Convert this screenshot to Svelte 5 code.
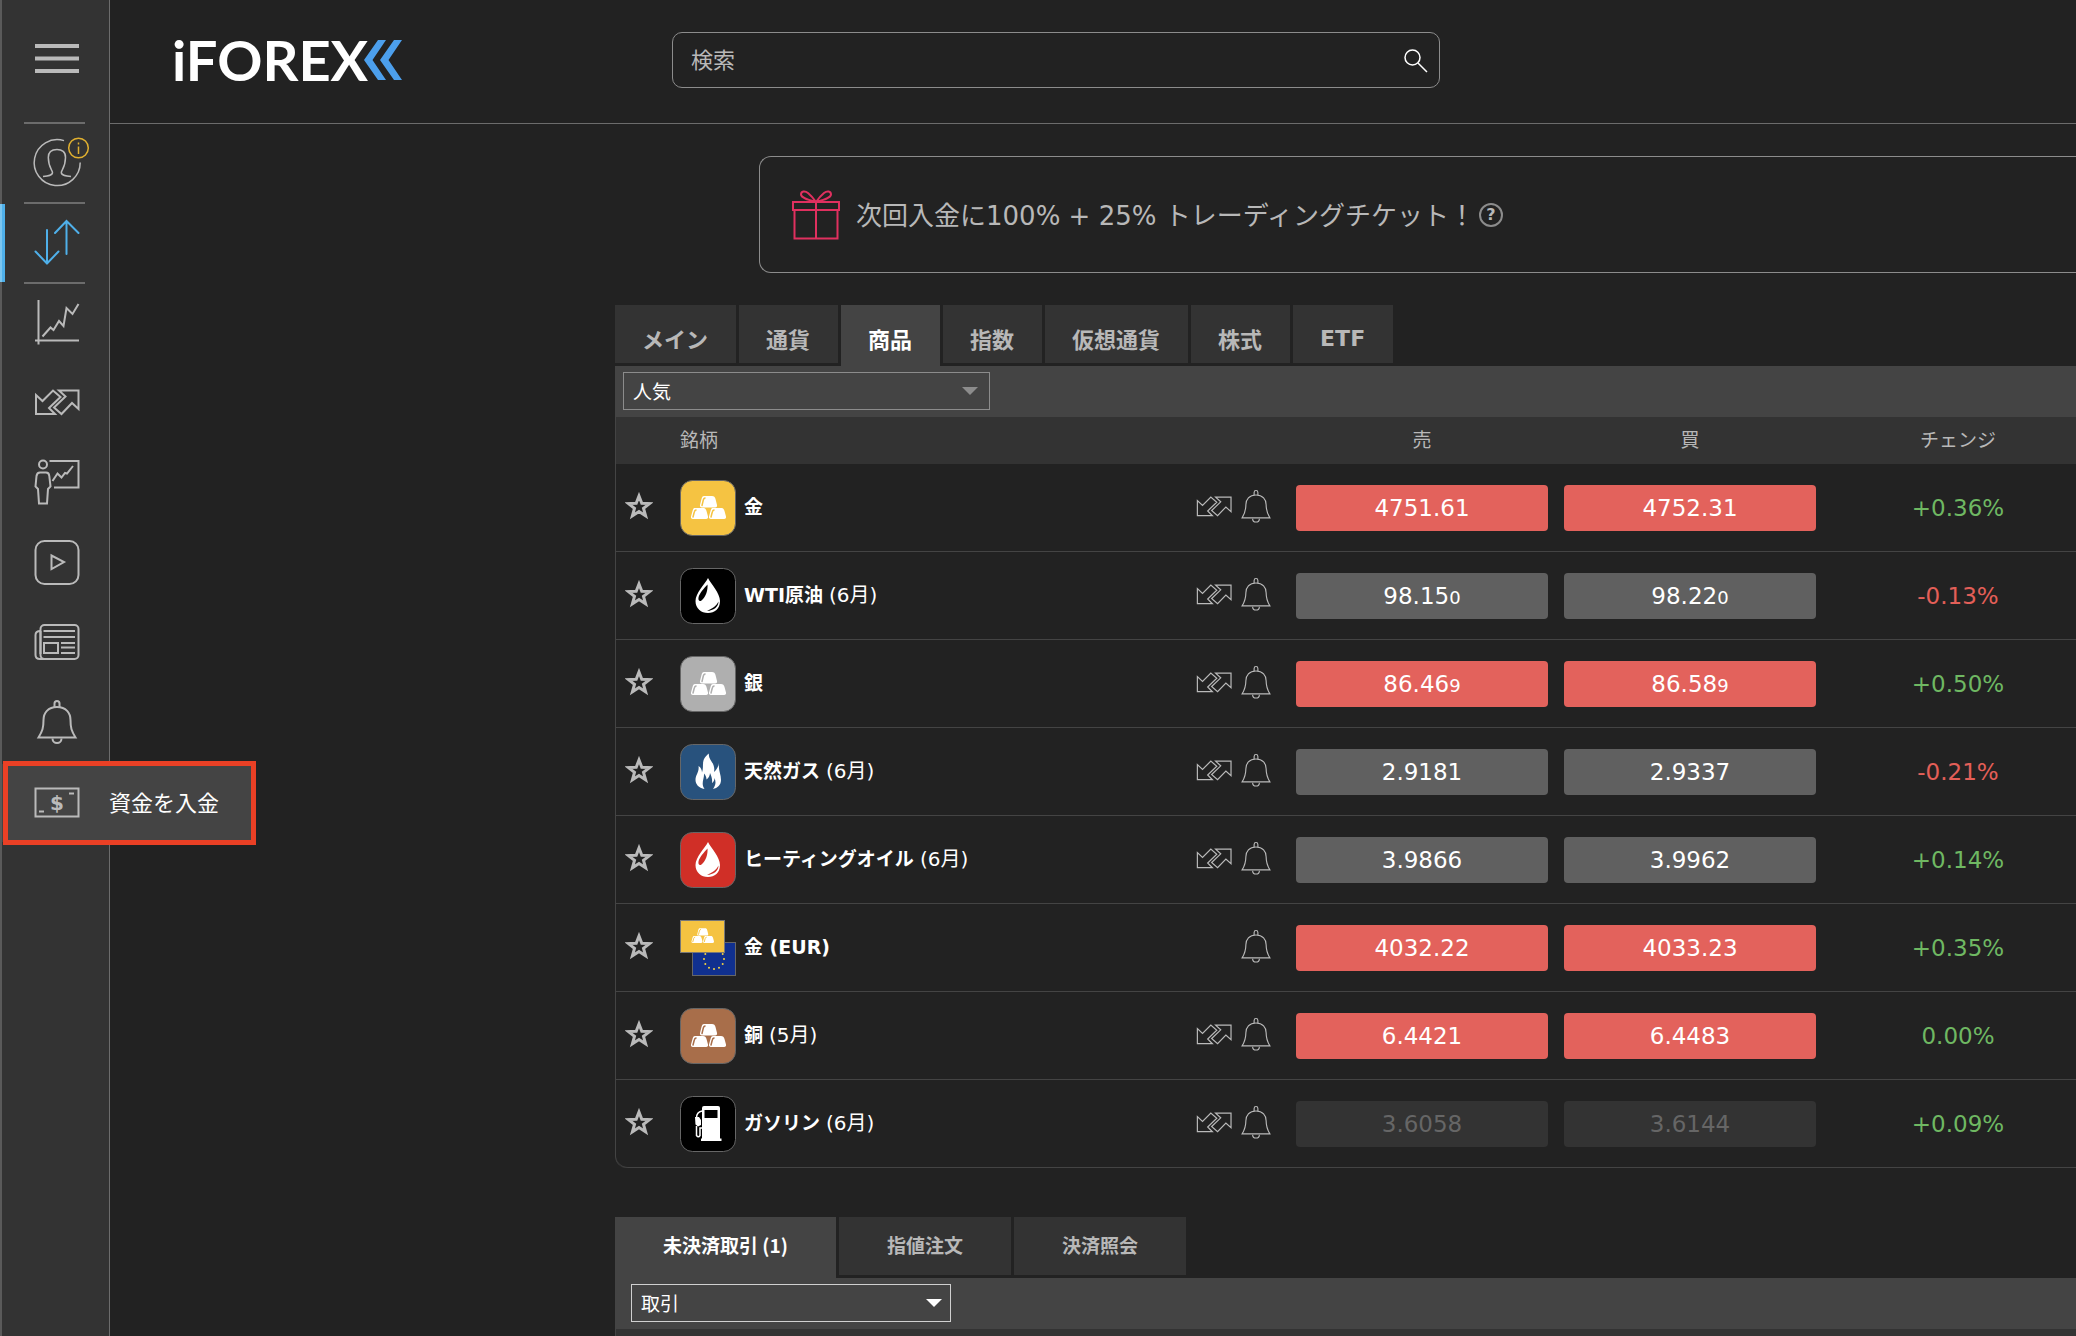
<script lang="ts">
  type Price = { main: string; small?: string };
  type Row = {
    id: string;
    icon: "metal" | "drop" | "flame" | "pair" | "pump";
    color: string;
    name: string;
    month?: string;
    deal: boolean;
    sell: Price;
    buy: Price;
    state: "down" | "flat" | "closed";
    change: string;
  };

  const nav = [
    { id: "account", label: "アカウント", line: true },
    { id: "trade", label: "トレード", line: true },
    { id: "chart", label: "チャート" },
    { id: "deal", label: "取引" },
    { id: "learn", label: "教育" },
    { id: "video", label: "ビデオ" },
    { id: "news", label: "ニュース" },
    { id: "bell", label: "アラート" },
  ];

  const rows: Row[] = [
    { id: "gold", icon: "metal", color: "#f5c342", name: "金", deal: true, sell: { main: "4751.61" }, buy: { main: "4752.31" }, state: "down", change: "+0.36%" },
    { id: "wti", icon: "drop", color: "#000", name: "WTI原油", month: "(6月)", deal: true, sell: { main: "98.15", small: "0" }, buy: { main: "98.22", small: "0" }, state: "flat", change: "-0.13%" },
    { id: "silver", icon: "metal", color: "#afafaf", name: "銀", deal: true, sell: { main: "86.46", small: "9" }, buy: { main: "86.58", small: "9" }, state: "down", change: "+0.50%" },
    { id: "gas", icon: "flame", color: "#28527d", name: "天然ガス", month: "(6月)", deal: true, sell: { main: "2.9181" }, buy: { main: "2.9337" }, state: "flat", change: "-0.21%" },
    { id: "heating", icon: "drop", color: "#d02f27", name: "ヒーティングオイル", month: "(6月)", deal: true, sell: { main: "3.9866" }, buy: { main: "3.9962" }, state: "flat", change: "+0.14%" },
    { id: "goldeur", icon: "pair", color: "#f5c342", name: "金 (EUR)", deal: false, sell: { main: "4032.22" }, buy: { main: "4033.23" }, state: "down", change: "+0.35%" },
    { id: "copper", icon: "metal", color: "#a86e4a", name: "銅", month: "(5月)", deal: true, sell: { main: "6.4421" }, buy: { main: "6.4483" }, state: "down", change: "0.00%" },
    { id: "gasoline", icon: "pump", color: "#000", name: "ガソリン", month: "(6月)", deal: true, sell: { main: "3.6058" }, buy: { main: "3.6144" }, state: "closed", change: "+0.09%" },
  ];

  const markets = ["メイン", "通貨", "商品", "指数", "仮想通貨", "株式", "ETF"];
  const reports = ["未決済取引 (1)", "指値注文", "決済照会"];

  // twelve flag stars on a circle
  const stars = Array.from({ length: 12 }, (_, i) => {
    const a = (i * Math.PI) / 6;
    return { x: 34 + 10 * Math.sin(a), y: 39 - 10 * Math.cos(a) };
  });

  let market = $state("商品");
  let report = $state("未決済取引 (1)");
  let query = $state("");
</script>

{#snippet bars()}
  <path fill="#fff" d="M24 16h8c2 0 3 1 3.5 3l1.5 6c.3 1.5-.3 2.5-2 2.5H22c-1.7 0-2.3-1-2-2.5l1.5-6c.5-2 1-3 2.5-3z" />
  <path fill="#fff" d="M15 28h8c2 0 3 1 3.5 3l1.5 5.5c.3 1.5-.3 2.5-2 2.5H13c-1.7 0-2.3-1-2-2.5l1.5-5.5c.5-2 1-3 2.5-3z" />
  <path fill="#fff" d="M33 28h8c2 0 3 1 3.5 3l1.5 5.5c.3 1.5-.3 2.5-2 2.5H31c-1.7 0-2.3-1-2-2.5l1.5-5.5c.5-2 1-3 2.5-3z" />
{/snippet}

{#snippet shine(color: string)}
  <g fill="none" stroke={color} stroke-width="1.5" stroke-linecap="round">
    <path d="M22 25.5l1.3-5.5q.4-1.8 1.7-2" />
    <path d="M13 37l1.3-5q.4-1.8 1.7-2" />
    <path d="M31 37l1.3-5q.4-1.8 1.7-2" />
  </g>
{/snippet}

{#snippet icon(id: string)}
  <svg class="icon" viewBox="0 0 48 48" aria-hidden="true">
    {#if id === "account"}
      <g stroke-width="1.5">
        <path d="M31 1.6A23 23 0 1 0 47.2 23.5" />
        <path d="M10 37.5C15 37 19.5 36.5 19.5 33.5C19.5 31 15.5 29 15.3 18.5C15.3 13 19 10.5 24 10.5C29 10.5 32.7 13 32.5 18.5C32.3 29 28.3 31 28.3 33.5C28.3 36.5 33 37 38 37.5" />
        <g stroke="#e0b030">
          <circle cx="45.5" cy="9" r="9.8" />
          <path d="M45.5 7.5V15M45.5 3.5v2" />
        </g>
      </g>
    {:else if id === "trade"}
      <path d="M14 11V44.5M2.5 32.5L14 44.5L25.5 32.5M33.5 35V2M22 14L33.5 2L45.5 14" stroke-linecap="round" />
    {:else if id === "chart"}
      <path d="M5.5 1V45.5M2 41.5H46M9.5 37.5L17.5 28.5L20.5 31L26 22L30.5 27L33.5 9L39.5 15L45.5 5" />
    {:else if id === "deal"}
      <path d="M3 16V35H22L16 29L27.5 18L20 11.5L9.5 22Z" />
      <path d="M26 11.5H45.5V30L39 24L28.5 35L21 28.5L32.5 17.5Z" />
    {:else if id === "learn"}
      <circle cx="10" cy="5.5" r="4" />
      <path d="M16.5 2H45.5V28.5H21M19.5 22L24.5 14.5L28.5 18.5L32 14L34 14.5L40 7" />
      <path d="M7 13.5H13Q16 13.5 16.3 17L17.5 27.5L15 30L14 44.5H6L5 30L2.5 27.5L3.5 17Q4 13.5 7 13.5Z" />
    {:else if id === "video"}
      <rect x="2.5" y="2" width="43" height="43" rx="9" />
      <path d="M18.5 16.5V30L31 23Z" />
    {:else if id === "news"}
      <rect x="7.5" y="6" width="38" height="34" rx="4" />
      <path d="M7.5 12Q2.5 12 2.5 16V36Q2.5 40 7 40H12M7.5 12V35M10.5 12H42M10.5 18H42M28 24H42M28 28.5H42M28 34H42" />
      <rect x="11" y="24" width="14" height="10" />
    {:else if id === "bell"}
      <path d="M24 8C15 8 10.5 14 10.5 21C10.5 29 9.5 32 5.5 38.5H42.5C38.5 32 37.5 29 37.5 21C37.5 14 33 8 24 8Z" />
      <path d="M21.5 8V4.5Q21.5 2 24 2Q26.5 2 26.5 4.5V8M19.5 39.5A4.5 4.5 0 0 0 28.5 39.5" />
    {:else}
      <rect x="2.5" y="9.5" width="43" height="28" />
      <path d="M36 14.5H41M6 32.5H11" />
      <text x="24" y="31" text-anchor="middle">$</text>
    {/if}
  </svg>
{/snippet}

{#snippet price(p: Price, state: string, side: string)}
  <button class="price {state}" disabled={state === "closed"} aria-label="{side} {p.main}{p.small ?? ''}">
    {p.main}{#if p.small}<span class="pip">{p.small}</span>{/if}
  </button>
{/snippet}

<div class="app">
  <nav class="sidebar">
    <button class="nav-item menu" aria-label="メニュー">
      <svg class="icon" viewBox="0 0 48 48" aria-hidden="true">
        <path stroke-width="4" d="M2 11H46M2 23.5H46M2 36H46" />
      </svg>
    </button>
    <hr />
    {#each nav as n (n.id)}
      <button class="nav-item" class:active={n.id === "trade"} aria-label={n.label}>
        {@render icon(n.id)}
      </button>
      <hr class:blank={!n.line} />
    {/each}
    <button class="nav-item deposit">
      {@render icon("deposit")}
      <span>資金を入金</span>
    </button>
  </nav>

  <div class="page">
    <header class="topbar">
      <a class="logo" href="/" aria-label="iFOREX">
        <span>iFOREX</span>
        <svg viewBox="0 0 38 40" aria-hidden="true">
          <path d="M14 0H22L8.5 20L22 40H14L0 20ZM30 0H38L24.5 20L38 40H30L16 20Z" />
        </svg>
      </a>
      <label class="search">
        <input type="text" placeholder="検索" aria-label="検索" bind:value={query} />
        <svg viewBox="0 0 24 24" aria-hidden="true">
          <circle cx="8.5" cy="9.5" r="7.5" />
          <path d="M14 15L23 24" />
        </svg>
      </label>
    </header>

    <main>
      <section class="banner">
        <svg class="gift" viewBox="0 0 48 50" aria-hidden="true">
          <path d="M1 12H47V20H1ZM2.5 20V48.5H45.5V20M24 12V48.5" />
          <path d="M24 12C17 10 9 8 9 4.5C9 1 13 .5 16 3C19 5.5 22 9 24 12C26 9 29 5.5 32 3C35 .5 39 1 39 4.5C39 8 31 10 24 12Z" />
        </svg>
        <span>次回入金に100% + 25% トレーディングチケット！</span>
        <button class="help" aria-label="ヘルプ">?</button>
      </section>

      <div class="tabs market-tabs" role="tablist">
        {#each markets as m (m)}
          <button role="tab" aria-selected={market === m} class:selected={market === m} onclick={() => (market = m)}>{m}</button>
        {/each}
      </div>

      <section class="panel">
        <div class="filter">
          <div class="select wide">
            <select aria-label="カテゴリー"><option>人気</option></select>
          </div>
        </div>
        <table>
          <thead>
            <tr>
              <th class="col-star"></th>
              <th class="col-name">銘柄</th>
              <th class="col-tools"></th>
              <th class="col-price">売</th>
              <th class="col-price">買</th>
              <th class="col-change">チェンジ</th>
            </tr>
          </thead>
          <tbody>
            {#each rows as r (r.id)}
              <tr>
                <td class="col-star">
                  <button class="plain" aria-label="お気に入り">
                    <svg class="star" viewBox="0 0 28 28" aria-hidden="true">
                      <path d="M14 4L16.8 11.3L24.5 11.6L18.5 16.3L20.6 23.8L14 19.5L7.4 23.8L9.5 16.3L3.5 11.6L11.2 11.3Z" />
                    </svg>
                  </button>
                </td>
                <td class="col-name">
                  <div class="instrument">
                    <svg class="badge" viewBox="0 0 56 56" aria-hidden="true">
                      {#if r.icon === "pair"}
                        <rect x="12.5" y="22.5" width="43" height="33" fill="#10308f" stroke="#666" />
                        {#each stars as s}
                          <circle cx={s.x} cy={s.y} r="1" fill="#f5d342" />
                        {/each}
                        <rect x=".5" y=".5" width="44" height="32" fill={r.color} stroke="#777" />
                        <g transform="translate(4.5 -2) scale(.64)">
                          {@render bars()}
                          {@render shine(r.color)}
                        </g>
                      {:else}
                        <rect x=".5" y=".5" width="55" height="55" rx="12" fill={r.color} stroke="#666" />
                        {#if r.icon === "metal"}
                          {@render bars()}
                          {@render shine(r.color)}
                        {:else if r.icon === "drop"}
                          <path fill="#fff" d="M28 10C31 16 40 25 40 33C40 41 34.5 45 28 45C21 45 15.5 40.5 15.5 33C15.5 25 25 16 28 10Z" />
                          <path fill={r.color} d="M27.5 16.5C28 22 26 29 21.5 32.5C19.5 34 18 32.5 18.5 29.5C19.5 25 24 20.5 27.5 16.5ZM38.5 33.5C38.5 39 33.5 42.5 27 43C32.5 40.5 36.5 38 38.5 33.5Z" />
                        {:else if r.icon === "flame"}
                          <path fill="#fff" d="M29 9.5C27.5 15.5 36 19 34 28C36.5 26 38.5 22.5 39 19C38 26 41 30 41 36C41 41 37.5 44 33 45C36 41 36 38 34.5 34C34.5 36.5 33.5 38 32 39C32.5 35 31.5 32.5 30 29C30 31.5 28.5 34 26.5 35.5C26.5 33 25.5 31 24 29.5C24.5 35 20.5 39 24.5 45C18.5 44 15.5 40 15.5 36C15.5 31 19.5 27.5 18.5 22C21 23.5 22 26 22 28.5C24.5 22 20 16 29 9.5Z" />
                        {:else}
                          <path fill="#fff" d="M24 10H38Q40 10 40 12V42.5H41.5V45H21V42.5H22V12Q22 10 24 10Z" />
                          <path fill="#000" d="M24.5 14H37.5V22H24.5Z" />
                          <path fill="none" stroke="#fff" stroke-width="1.5" d="M22 15Q16.5 16 16.5 22M16.5 30V39.5Q18.5 42 20 39.5V32H22" />
                          <path fill="#fff" d="M15 21H19L21 24V29L18 30.5L15.5 28.5Z" />
                        {/if}
                      {/if}
                    </svg>
                    <span class="name"><b>{r.name}</b>{#if r.month}{" "}<span class="month">{r.month}</span>{/if}</span>
                  </div>
                </td>
                <td class="col-tools">
                  <div class="tools">
                    {#if r.deal}
                      <button class="plain deal" aria-label="取引">{@render icon("deal")}</button>
                    {/if}
                    <button class="plain bell" aria-label="アラート">{@render icon("bell")}</button>
                  </div>
                </td>
                <td class="col-price">{@render price(r.sell, r.state, "売")}</td>
                <td class="col-price">{@render price(r.buy, r.state, "買")}</td>
                <td class="col-change" class:minus={r.change.startsWith("-")}>{r.change}</td>
              </tr>
            {/each}
          </tbody>
        </table>
      </section>

      <div class="tabs report-tabs" role="tablist">
        {#each reports as t (t)}
          <button role="tab" aria-selected={report === t} class:selected={report === t} onclick={() => (report = t)}>{t}</button>
        {/each}
      </div>

      <section class="panel">
        <div class="filter report-filter">
          <div class="select bright">
            <select aria-label="表示"><option>取引</option></select>
          </div>
        </div>
        <div class="report-head"></div>
      </section>
    </main>
  </div>
</div>

<style>
  :global(body) {
    margin: 0;
    background: #222;
  }
  .app {
    display: flex;
    height: 100vh;
    overflow: hidden;
    background: #222;
    color: #fff;
    font-family: Verdana, "DejaVu Sans", "Noto Sans CJK JP", sans-serif;
    font-size: 19px;
  }
  button {
    border: 0;
    padding: 0;
    background: none;
    color: inherit;
    font: inherit;
    cursor: pointer;
  }
  .plain { display: flex; }

  /* sidebar */
  .sidebar {
    position: relative;
    z-index: 2;
    flex: none;
    display: flex;
    flex-direction: column;
    box-sizing: border-box;
    width: 110px;
    border-left: 2px solid #5a5a5a;
    border-right: 1px solid #6c6c6c;
    background: #333;
  }
  .sidebar hr {
    flex: none;
    width: 61px;
    height: 2px;
    margin: 0 0 0 22px;
    border: 0;
    background: #6c6c6c;
  }
  .sidebar hr.blank { background: none; }
  .nav-item {
    position: relative;
    flex: none;
    display: flex;
    align-items: center;
    height: 78px;
    padding-left: 31px;
  }
  .nav-item.menu {
    height: 122px;
    padding-bottom: 5px;
    box-sizing: border-box;
  }
  .nav-item.active { color: #4fb0ea; }
  .nav-item.active::before {
    content: "";
    position: absolute;
    left: -2px;
    top: 0;
    bottom: 0;
    width: 3px;
    border-left: 2px solid #7cc6f0;
    background: #4fb0ea;
  }
  .icon {
    flex: none;
    width: 48px;
    height: 48px;
    overflow: visible;
    fill: none;
    stroke: #bababa;
    stroke-width: 2;
  }
  .active .icon { stroke: #4fb0ea; }
  .icon text {
    fill: #bababa;
    stroke: none;
    font-size: 20px;
    font-weight: bold;
  }
  .nav-item.deposit {
    width: 252px;
    gap: 28px;
    background: #444;
    font-size: 22px;
    white-space: nowrap;
  }
  .nav-item.deposit span { padding-bottom: 4px; }
  .nav-item.deposit::after {
    content: "";
    position: absolute;
    inset: -3px -2px -3px 1px;
    border: 5px solid #ea4025;
  }

  /* header */
  .page {
    flex: 1;
    min-width: 0;
    display: flex;
    flex-direction: column;
  }
  .topbar {
    flex: none;
    display: flex;
    align-items: center;
    box-sizing: border-box;
    height: 124px;
    padding-bottom: 3px;
    border-bottom: 1px solid #6c6c6c;
  }
  .logo {
    display: flex;
    align-items: center;
    width: 500px;
    padding-left: 62px;
    color: #fff;
    font: bold 56px/64px Lato, sans-serif;
    text-decoration: none;
  }
  .logo svg {
    width: 38px;
    height: 40px;
    margin-left: -4px;
    fill: #4c9fec;
  }
  .search {
    display: flex;
    align-items: center;
    box-sizing: border-box;
    width: 768px;
    height: 56px;
    padding: 0 11px 0 18px;
    border: 1px solid #8c8c8c;
    border-radius: 10px;
  }
  .search input {
    flex: 1;
    min-width: 0;
    padding: 0;
    border: 0;
    outline: 0;
    background: none;
    color: #fff;
    font: inherit;
    font-size: 22px;
  }
  .search input::placeholder {
    color: #b8b8b8;
    opacity: 1;
  }
  .search svg {
    width: 24px;
    height: 24px;
    overflow: visible;
    fill: none;
    stroke: #fff;
    stroke-width: 1.5;
  }

  /* banner */
  main {
    flex: 1;
    min-height: 0;
    margin-left: 505px;
    padding-top: 32px;
  }
  .banner {
    display: flex;
    align-items: center;
    box-sizing: border-box;
    height: 117px;
    margin-left: 144px;
    padding-left: 32px;
    border: 1px solid #8c8c8c;
    border-right: 0;
    border-radius: 12px 0 0 12px;
    color: #b8b8b8;
    font-size: 26px;
    white-space: nowrap;
  }
  .banner span { padding-bottom: 3px; }
  .gift {
    width: 48px;
    height: 50px;
    margin-right: 16px;
    fill: none;
    stroke: #e0305f;
    stroke-width: 2;
  }
  .help {
    box-sizing: border-box;
    width: 24px;
    height: 24px;
    margin-left: 4px;
    border: 2px solid #8c8c8c;
    border-radius: 50%;
    font-size: 16px;
    font-weight: bold;
    line-height: 20px;
  }

  /* tabs */
  .tabs {
    display: flex;
    gap: 3px;
    height: 61px;
    color: #b8b8b8;
    font-weight: bold;
  }
  .tabs button {
    height: 58px;
    background: #333;
    white-space: nowrap;
  }
  .tabs button.selected {
    height: 61px;
    background: #444;
    color: #fff;
  }
  .market-tabs {
    margin-top: 32px;
    font-size: 22px;
  }
  .market-tabs button { padding: 8px 28px 0 27px; }
  .market-tabs button.selected { padding-bottom: 3px; }
  .report-tabs {
    margin-top: 49px;
    font-family: "Noto Sans CJK JP", sans-serif;
  }
  .report-tabs button { padding: 0 48px 3px; }
  .report-tabs button.selected { padding-bottom: 6px; }

  /* filters */
  .filter {
    display: flex;
    align-items: center;
    height: 51px;
    padding-left: 8px;
    padding-bottom: 1px;
    box-sizing: border-box;
    background: #444;
  }
  .report-filter { padding-left: 16px; }
  .select {
    position: relative;
    width: 320px;
  }
  .select.wide { width: 367px; }
  .select::after {
    content: "";
    position: absolute;
    right: 9px;
    top: 15px;
    border: 8px solid transparent;
    border-top-color: #8c8c8c;
    border-bottom: 0;
    pointer-events: none;
  }
  .select.wide::after { right: 12px; }
  .select.bright::after { border-top-color: #fff; }
  .select select {
    appearance: none;
    display: block;
    box-sizing: border-box;
    width: 100%;
    height: 38px;
    padding: 1px 9px 0;
    border: 1px solid #8c8c8c;
    border-radius: 0;
    background: #444;
    color: #fff;
    font: inherit;
  }
  .select.bright select { border-color: #d0d0d0; }

  /* instruments */
  table {
    width: 100%;
    table-layout: fixed;
    border-collapse: separate;
    border-spacing: 0;
    border-left: 1px solid #444;
    border-bottom-left-radius: 12px;
  }
  th, td {
    box-sizing: border-box;
    padding: 0;
    border-bottom: 1px solid #444;
  }
  tr:last-child td:first-child { border-bottom-left-radius: 12px; }
  th {
    height: 47px;
    padding-bottom: 4px;
    border: 0;
    background: #333;
    color: #b8b8b8;
    font-weight: normal;
  }
  td { height: 88px; }
  .col-star { width: 64px; }
  .col-name { text-align: left; }
  .col-tools { width: 110px; }
  .col-price {
    width: 268px;
    text-align: center;
  }
  .col-change {
    width: 252px;
    padding-left: 16px;
    text-align: center;
  }
  td.col-change {
    color: #6fb862;
    font-size: 23px;
  }
  td.col-change.minus { color: #e35f58; }
  .star {
    width: 28px;
    height: 28px;
    margin-left: 9px;
    margin-bottom: 4px;
    fill: none;
    stroke: #bababa;
    stroke-width: 3;
  }
  .instrument {
    display: flex;
    align-items: center;
    gap: 8px;
    white-space: nowrap;
  }
  .name { padding-bottom: 4px; }
  .month { font-size: 20px; }
  .badge {
    flex: none;
    width: 56px;
    height: 56px;
  }
  .tools {
    display: flex;
    align-items: center;
    justify-content: flex-end;
    gap: 5px;
    padding-right: 14px;
    padding-bottom: 2px;
  }
  .tools .icon { stroke-width: 1.5; }
  .deal .icon {
    width: 38px;
    height: 38px;
  }
  .bell .icon {
    width: 36px;
    height: 36px;
  }
  .price {
    width: 252px;
    height: 46px;
    border-radius: 4px;
    background: #606060;
    font-size: 23px;
  }
  .price.down { background: #e3625c; }
  .price.closed {
    background: #333;
    color: #666;
  }
  .pip { font-size: 18px; }

  .report-head {
    height: 47px;
    border-left: 1px solid #444;
    background: #333;
  }
</style>
